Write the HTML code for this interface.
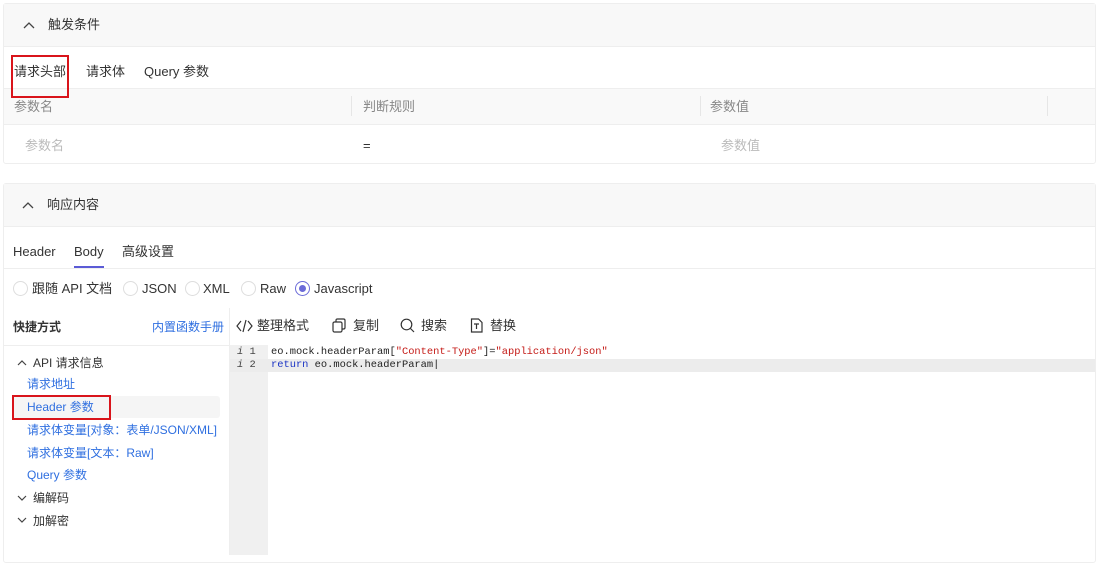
<!DOCTYPE html>
<html><head><meta charset="utf-8"><style>
*{box-sizing:border-box;margin:0;padding:0}
body{width:1098px;height:555px;background:#fff;font-family:"Liberation Sans","Noto Sans CJK SC",sans-serif;font-size:13px;line-height:16px;color:#333;position:relative;overflow:hidden}
.abs{position:absolute}
.card{position:absolute;left:3px;width:1093px;border:1px solid #eee;border-radius:3px}
.hd{position:absolute;left:0;right:0;height:43px;background:#f8f8f8;border-bottom:1px solid #eee}
.hd span{position:absolute;top:13px}
.t{position:absolute;white-space:nowrap}
.blue{color:#2f6fe0}
.radio{position:absolute;width:15px;height:15px;border:1px solid #ddd;border-radius:50%;top:281px}
.mono{font-family:"Liberation Mono",monospace;font-size:10.4px;line-height:13px}
</style></head><body>
<div class="card" style="top:3px;height:161px">
 <div class="hd" style="top:0"><svg class="abs" style="left:19px;top:17px" width="12" height="8"><path d="M1 7L6 2L11 7" stroke="#444" stroke-width="1.3" fill="none"/></svg><span style="left:44px">触发条件</span></div>
 <div class="t" style="left:10px;top:60px">请求头部</div>
 <div class="abs" style="left:10px;top:84px;width:54px;height:2px;background:#5b5bd6"></div>
 <div class="t" style="left:82px;top:60px">请求体</div>
 <div class="t" style="left:140px;top:60px">Query 参数</div>
 <div class="abs" style="left:0;right:0;top:84px;height:37px;background:#f9f9f9;border-top:1px solid #eee;border-bottom:1px solid #eee"></div>
 <div class="t" style="left:10px;top:95px;color:#888">参数名</div>
 <div class="abs" style="left:347px;top:92px;width:1px;height:20px;background:#e6e6e6"></div>
 <div class="t" style="left:359px;top:95px;color:#888">判断规则</div>
 <div class="abs" style="left:696px;top:92px;width:1px;height:20px;background:#e6e6e6"></div>
 <div class="t" style="left:706px;top:95px;color:#888">参数值</div>
 <div class="abs" style="left:1043px;top:92px;width:1px;height:20px;background:#e6e6e6"></div>
 <div class="t" style="left:21px;top:134px;color:#bbb">参数名</div>
 <div class="t" style="left:359px;top:134px">=</div>
 <div class="t" style="left:717px;top:134px;color:#bbb">参数值</div>
</div>
<div class="card" style="top:183px;height:380px"></div>
<div class="hd" style="top:184px;left:4px;right:3px"><svg class="abs" style="left:18px;top:17px" width="12" height="8"><path d="M1 7L6 2L11 7" stroke="#444" stroke-width="1.3" fill="none"/></svg><span style="left:43px">响应内容</span></div>
<div class="t" style="left:13px;top:244px">Header</div>
<div class="t" style="left:74px;top:244px">Body</div>
<div class="abs" style="left:74px;top:266px;width:30px;height:2px;background:#5b5bd6"></div>
<div class="t" style="left:122px;top:244px">高级设置</div>
<div class="abs" style="left:4px;right:3px;top:268px;height:1px;background:#eee"></div>
<div class="radio" style="left:13px"></div><div class="t" style="left:32px;top:281px">跟随 API 文档</div>
<div class="radio" style="left:123px"></div><div class="t" style="left:142px;top:281px">JSON</div>
<div class="radio" style="left:185px"></div><div class="t" style="left:203px;top:281px">XML</div>
<div class="radio" style="left:241px"></div><div class="t" style="left:260px;top:281px">Raw</div>
<div class="radio" style="left:295px;border-color:#6b6bd8"><div class="abs" style="left:3px;top:3px;width:7px;height:7px;border-radius:50%;background:#6b6bd8"></div></div><div class="t" style="left:314px;top:281px">Javascript</div>
<div class="t" style="left:13px;top:319px;font-weight:bold;font-size:12px">快捷方式</div>
<div class="t blue" style="left:152px;top:319px;font-size:12px">内置函数手册</div>
<div class="abs" style="left:4px;top:345px;width:225px;height:1px;background:#eee"></div>
<div class="abs" style="left:229px;top:308px;width:1px;height:247px;background:#eee"></div>
<svg class="abs" style="left:17px;top:359px" width="10" height="7"><path d="M1 6L5 2L9 6" stroke="#444" stroke-width="1.2" fill="none"/></svg>
<div class="t" style="left:33px;top:355px;font-size:12px">API 请求信息</div>
<div class="t blue" style="left:27px;top:376px;font-size:12px">请求地址</div>
<div class="abs" style="left:12px;top:396px;width:208px;height:22px;background:#f5f5f5;border-radius:3px"></div>
<div class="t blue" style="left:27px;top:399px;font-size:12px">Header 参数</div>
<div class="abs" style="left:12px;top:395px;width:99px;height:25px;border:2px solid #d9141b"></div>
<div class="t blue" style="left:27px;top:422px;font-size:12px">请求体变量[对象：表单/JSON/XML]</div>
<div class="t blue" style="left:27px;top:445px;font-size:12px">请求体变量[文本：Raw]</div>
<div class="t blue" style="left:27px;top:467px;font-size:12px">Query 参数</div>
<svg class="abs" style="left:17px;top:495px" width="10" height="7"><path d="M1 1L5 5L9 1" stroke="#444" stroke-width="1.2" fill="none"/></svg>
<div class="t" style="left:33px;top:490px;font-size:12px">编解码</div>
<svg class="abs" style="left:17px;top:517px" width="10" height="7"><path d="M1 1L5 5L9 1" stroke="#444" stroke-width="1.2" fill="none"/></svg>
<div class="t" style="left:33px;top:513px;font-size:12px">加解密</div>
<svg class="abs" style="left:236px;top:319px" width="17" height="14"><path d="M5 2L1 7L5 12M12 2L16 7L12 12M10 1L7 13" stroke="#333" stroke-width="1.2" fill="none"/></svg>
<div class="t" style="left:257px;top:318px">整理格式</div>
<svg class="abs" style="left:332px;top:318px" width="14" height="15"><rect x="1" y="4" width="9" height="10" rx="1.5" stroke="#333" fill="none" stroke-width="1.2"/><path d="M4 4V2.5Q4 1 5.5 1H11.5Q13 1 13 2.5V9.5Q13 11 11.5 11H10" stroke="#333" fill="none" stroke-width="1.2"/></svg>
<div class="t" style="left:353px;top:318px">复制</div>
<svg class="abs" style="left:400px;top:318px" width="15" height="15"><circle cx="6.5" cy="6.5" r="5.3" stroke="#333" fill="none" stroke-width="1.2"/><path d="M10.5 10.5L14 14" stroke="#333" stroke-width="1.2"/></svg>
<div class="t" style="left:421px;top:318px">搜索</div>
<svg class="abs" style="left:470px;top:318px" width="13" height="15"><path d="M1.5 1H8.5L12 4.5V14H1.5Z" stroke="#333" fill="none" stroke-width="1.2"/><path d="M4 6H9M6.5 6V11" stroke="#333" stroke-width="1.2"/></svg>
<div class="t" style="left:490px;top:318px">替换</div>
<div class="abs" style="left:230px;top:345px;width:38px;height:210px;background:#f0f0f0"></div>
<div class="abs" style="left:230px;top:359px;width:865px;height:13px;background:#ececec"></div>
<div class="t mono" style="left:237px;top:346px;color:#444"><i>i</i> 1</div>
<div class="t mono" style="left:237px;top:359px;color:#444"><i>i</i> 2</div>
<div class="t mono" style="left:271px;top:346px;color:#222">eo.mock.headerParam[<span style="color:#c41a16">"Content-Type"</span>]=<span style="color:#c41a16">"application/json"</span></div>
<div class="t mono" style="left:271px;top:359px;color:#222"><span style="color:#1a33c4">return</span> eo.mock.headerParam|</div>
<div class="abs" style="left:11px;top:55px;width:58px;height:43px;border:2px solid #d9141b"></div>
</body></html>
